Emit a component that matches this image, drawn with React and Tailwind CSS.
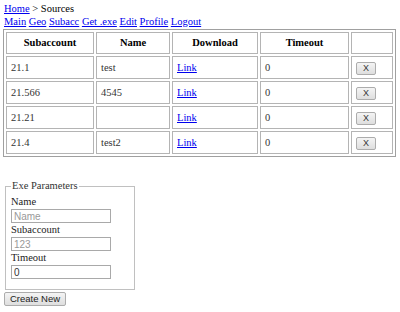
const rows = [
  { sub: '21.1', name: 'test', timeout: '0' },
  { sub: '21.566', name: '4545', timeout: '0' },
  { sub: '21.21', name: '', timeout: '0' },
  { sub: '21.4', name: 'test2', timeout: '0' },
]

const serif = { fontFamily: '"Liberation Serif", "Times New Roman", serif' }
const sans = { fontFamily: '"Liberation Sans", Arial, sans-serif' }

const cell = 'border border-[#b4b4b4] px-[4px] text-left align-middle'
const head = 'border border-[#b4b4b4] px-[4px] text-center font-bold align-middle'

const XButton = () => (
  <button
    className="w-[20px] h-[13px] rounded-[2px] border border-[#acacac] bg-gradient-to-b from-[#f4f4f4] to-[#dedede] text-[9px] leading-[11px] text-[#333]"
    style={sans}
  >
    X
  </button>
)

const Field = ({ label, ...props }) => (
  <>
    <div className="h-[14px] leading-[14px] text-[#222]">{label}</div>
    <input
      className="block w-[100px] h-[14px] border border-[#a9a9a9] px-[2px] text-[10px] text-[#333] placeholder-[#999] bg-white"
      style={sans}
      {...props}
    />
  </>
)

export default function App() {
  return (
    <div className="w-[400px] h-[312px] bg-white text-black overflow-hidden" style={serif}>
      <div className="px-[4px] pt-[3px] text-[10.5px] leading-[12.5px]">
        <div>
          <a className="text-[#0000ee] underline">Home</a> &gt; Sources
        </div>
        <div>
          <a className="text-[#0000ee] underline">Main</a>{' '}
          <a className="text-[#0000ee] underline">Geo</a>{' '}
          <a className="text-[#0000ee] underline">Subacc</a>{' '}
          <a className="text-[#0000ee] underline">Get .exe</a>{' '}
          <a className="text-[#0000ee] underline">Edit</a>{' '}
          <a className="text-[#0000ee] underline">Profile</a>{' '}
          <a className="text-[#0000ee] underline">Logout</a>
        </div>
      </div>

      <table className="ml-[3px] mt-[1px] w-[393px] border border-[#a0a0a0] border-separate border-spacing-[2px] text-[10.5px]">
        <thead>
          <tr className="h-[22px]">
            <th className={`${head} w-[88px]`}>Subaccount</th>
            <th className={`${head} w-[74px]`}>Name</th>
            <th className={`${head} w-[86px]`}>Download</th>
            <th className={`${head} w-[89px]`}>Timeout</th>
            <th className={head}></th>
          </tr>
        </thead>
        <tbody>
          {rows.map((r) => (
            <tr key={r.sub} className="h-[23px]">
              <td className={`${cell} text-[#333]`}>{r.sub}</td>
              <td className={`${cell} text-[#333]`}>{r.name}</td>
              <td className={cell}>
                <a className="text-[#0000ee] underline">Link</a>
              </td>
              <td className={`${cell} text-[#333]`}>{r.timeout}</td>
              <td className={`${cell} pl-[4px]`}>
                <XButton />
              </td>
            </tr>
          ))}
        </tbody>
      </table>

      <fieldset className="ml-[5px] mt-[23px] w-[130px] border border-[#c0c0c0] px-[5px] pb-[10px] pt-0 text-[10.5px]">
        <legend className="px-[1px] leading-[12px] text-[#333]">Exe Parameters</legend>
        <div className="pt-[3px]">
          <Field label="Name" placeholder="Name" />
          <Field label="Subaccount" placeholder="123" />
          <Field label="Timeout" defaultValue="0" />
        </div>
      </fieldset>

      <button
        className="block ml-[4px] mt-[2px] w-[62px] h-[14px] rounded-[2px] border border-[#acacac] bg-gradient-to-b from-[#f4f4f4] to-[#dedede] text-[9.5px] leading-[12px] text-[#222]"
        style={sans}
      >
        Create New
      </button>
    </div>
  )
}
